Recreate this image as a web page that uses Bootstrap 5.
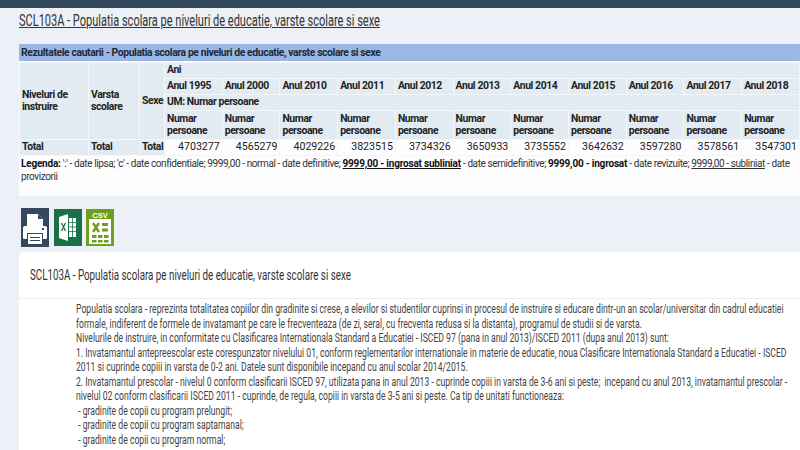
<!DOCTYPE html>
<html lang="ro">
<head>
  <meta charset="UTF-8">
  <meta name="viewport" content="width=device-width, initial-scale=1">
  <title>SCL103A</title>
  <link href="https://cdn.jsdelivr.net/npm/bootstrap@5.3.0/dist/css/bootstrap.min.css" rel="stylesheet">
  <style>
    html, body { height: 450px; overflow: hidden; }
    body { background: #edf0f6; font-family: "Liberation Sans Narrow", Roboto, sans-serif; color: #333; }
    .top-strip { height: 8px; background: #34495e; }
    .page-wrap { padding: 4px 0 0 19px; }
    /* the text in the shot is squeezed sideways, so the long lines get a scaleX */
    .page-title { font-size: 16px; font-weight: 400; line-height: 18px; margin: 0 0 14px; color: #333; text-decoration: underline; white-space: nowrap; transform: scaleX(.688); transform-origin: left top; }
    .result-box { background: #fdfdfe; height: 152px; font-size: 10.4px; color: #222; }
    .result-head { background: #9ab8e3; height: 17px; line-height: 17px; padding-left: 2px; font-weight: 700; color: #1d2a3c; letter-spacing: -.4px; }
    .stat-table { table-layout: fixed; width: 781px; border-collapse: collapse; margin-top: 1px; }
    .stat-table th, .stat-table td { border: 1px solid #f4f6f9; padding: 0 2px; line-height: 12.5px; vertical-align: middle; }
    .stat-table th { background: #e3ebf2; font-weight: 700; letter-spacing: -.4px; }
    .stat-table td { background: #fdfdfe; text-align: right; font-size: 10.6px; }
    .stat-table .row-ani { height: 16px; }
    .stat-table .row-total { height: 16px; }
    .stat-table .row-two { height: 29px; }
    .legend-text { padding: 1px 5px 1px 2px; line-height: 13px; font-size: 10px; letter-spacing: -.4px; color: #333; }
    .legend-text b { color: #111; letter-spacing: -.2px; }
    .icon-row { padding: 12px 0 0 2px; height: 56px; gap: 4px; }
    .icon-row svg { display: block; }
    .icon-row svg:first-child { margin-right: 1px; }
    .info-card { background: #fff; border-radius: 4px 0 0 0; height: 200px; overflow: hidden; }
    .info-title { height: 47px; padding: 15px 0 0 11px; border-bottom: 1px solid #eceef2; }
    .info-title span { display: block; font-size: 14.5px; line-height: 18px; color: #333; white-space: nowrap; transform: scaleX(.675); transform-origin: left top; }
    .info-body { width: 1036px; margin-left: 57px; padding-top: 3px; font-size: 12.5px; line-height: 14.5px; color: #444; transform: scaleX(.69); transform-origin: left top; }
  </style>
</head>
<body>
  <div class="top-strip"></div>
  <div class="page-wrap">
    <h1 class="page-title">SCL103A - Populatia scolara pe niveluri de educatie, varste scolare si sexe</h1>

    <div class="result-box">
      <div class="result-head">Rezultatele cautarii - Populatia scolara pe niveluri de educatie, varste scolare si sexe</div>
      <table class="stat-table">
        <colgroup>
          <col style="width:69px"><col style="width:51px"><col style="width:25px">
          <col span="11">
        </colgroup>
        <tbody id="stat-body">
          <tr class="row-ani">
            <th rowspan="4">Niveluri de instruire</th>
            <th rowspan="4">Varsta scolare</th>
            <th rowspan="4">Sexe</th>
            <th colspan="11">Ani</th>
          </tr>
          <tr class="row-ani" id="years"></tr>
          <tr class="row-ani"><th colspan="11">UM: Numar persoane</th></tr>
          <tr class="row-two" id="units"></tr>
          <tr class="row-total" id="totals"><th>Total</th><th>Total</th><th>Total</th></tr>
        </tbody>
      </table>
      <div class="legend-text"><b>Legenda:</b> ':' - date lipsa; 'c' - date confidentiale; 9999,00 - normal - date definitive; <b><u>9999,00 - ingrosat subliniat</u></b> - date semidefinitive; <b>9999,00 - ingrosat</b> - date revizuite; <u>9999,00 - subliniat</u> - date provizorii</div>
    </div>

    <div class="icon-row d-flex align-items-start">
      <svg width="28" height="39" viewBox="0 0 28 39">
        <rect width="28" height="39" fill="#34495e"/>
        <path d="M6 6h11l5 5v7H6z" fill="#fff"/>
        <path d="M17 6v5h5z" fill="#34495e"/>
        <path d="M4 18h20a2 2 0 0 1 2 2v10a1 1 0 0 1-1 1h-3v-6H6v6H3a1 1 0 0 1-1-1V20a2 2 0 0 1 2-2z" fill="#fff"/>
        <rect x="21" y="20" width="2" height="2" fill="#34495e"/>
        <rect x="7" y="26" width="14" height="10" fill="#fff"/>
        <path d="M9 29.500h10M9 32.500h10" stroke="#34495e" stroke-width="1"/>
      </svg>
      <svg width="28" height="38" viewBox="0 0 28 38">
        <rect y="1" width="28" height="37" fill="#1b7147"/>
        <path d="M5 9l9-3v27l-9-3z" fill="#fff"/>
        <path d="M7.500 15l4 8M11.500 15l-4 8" stroke="#1b7147" stroke-width="1.300"/>
        <path d="M15 10h7v19h-7z" fill="#fff"/>
        <path d="M15 14.500h7M15 19h7M15 23.500h7M18.500 10v19" stroke="#1b7147" stroke-width=".8"/>
      </svg>
      <svg width="28" height="38" viewBox="0 0 28 38">
        <rect y="1" width="28" height="37" fill="#6f9e1c"/>
        <text x="14" y="9.500" text-anchor="middle" font-family="Liberation Sans, sans-serif" font-size="7.500" font-weight="700" fill="#fff">CSV</text>
        <rect x="3" y="11" width="22" height="25" fill="#fff"/>
        <path d="M7 15l6 9M13 15l-6 9" stroke="#6f9e1c" stroke-width="2.400"/>
        <path d="M16 15h6v3h-6zM16 20.500h6v3h-6zM6 27h4.500v3H6zM12 27h4.500v3H12zM18 27h4.500v3H18zM6 32h4.500v2.500H6zM12 32h4.500v2.500H12zM18 32h4.500v2.500H18z" fill="#6f9e1c"/>
      </svg>
    </div>

    <div class="info-card">
      <div class="info-title"><span>SCL103A - Populatia scolara pe niveluri de educatie, varste scolare si sexe</span></div>
      <div class="info-body">
        Populatia scolara - reprezinta totalitatea copiilor din gradinite si crese, a elevilor si studentilor cuprinsi in procesul de instruire si educare dintr-un an scolar/universitar din cadrul educatiei formale, indiferent de formele de invatamant pe care le frecventeaza (de zi, seral, cu frecventa redusa si la distanta), programul de studii si de varsta.<br>
        Nivelurile de instruire, in conformitate cu Clasificarea Internationala Standard a Educatiei - ISCED 97 (pana in anul 2013)/ISCED 2011 (dupa anul 2013) sunt:<br>
        1. Invatamantul antepreescolar este corespunzator nivelului 01, conform reglementarilor internationale in materie de educatie, noua Clasificare Internationala Standard a Educatiei - ISCED 2011 si cuprinde copiii in varsta de 0-2 ani. Datele sunt disponibile incepand cu anul scolar 2014/2015.<br>
        2. Invatamantul prescolar - nivelul 0 conform clasificarii ISCED 97, utilizata pana in anul 2013 - cuprinde copiii in varsta de 3-6 ani si peste;&nbsp; incepand cu anul 2013, invatamantul prescolar - nivelul 02 conform clasificarii ISCED 2011 - cuprinde, de regula, copiii in varsta de 3-5 ani si peste. Ca tip de unitati functioneaza:<br>
        &nbsp;- gradinite de copii cu program prelungit;<br>
        &nbsp;- gradinite de copii cu program saptamanal;<br>
        &nbsp;- gradinite de copii cu program normal;
      </div>
    </div>
  </div>

  <script src="https://cdn.jsdelivr.net/npm/bootstrap@5.3.0/dist/js/bootstrap.bundle.min.js"></script>
  <script>
    const yrs = [1995, 2000, 2010, 2011, 2012, 2013, 2014, 2015, 2016, 2017, 2018];
    const vals = [4703277, 4565279, 4029226, 3823515, 3734326, 3650933, 3735552, 3642632, 3597280, 3578561, 3547301];
    yrs.forEach((y, i) => {
      document.getElementById('years').innerHTML += `<th>Anul ${y}</th>`;
      document.getElementById('units').innerHTML += '<th>Numar persoane</th>';
      document.getElementById('totals').innerHTML += `<td>${vals[i]}</td>`;
    });
  </script>
</body>
</html>
